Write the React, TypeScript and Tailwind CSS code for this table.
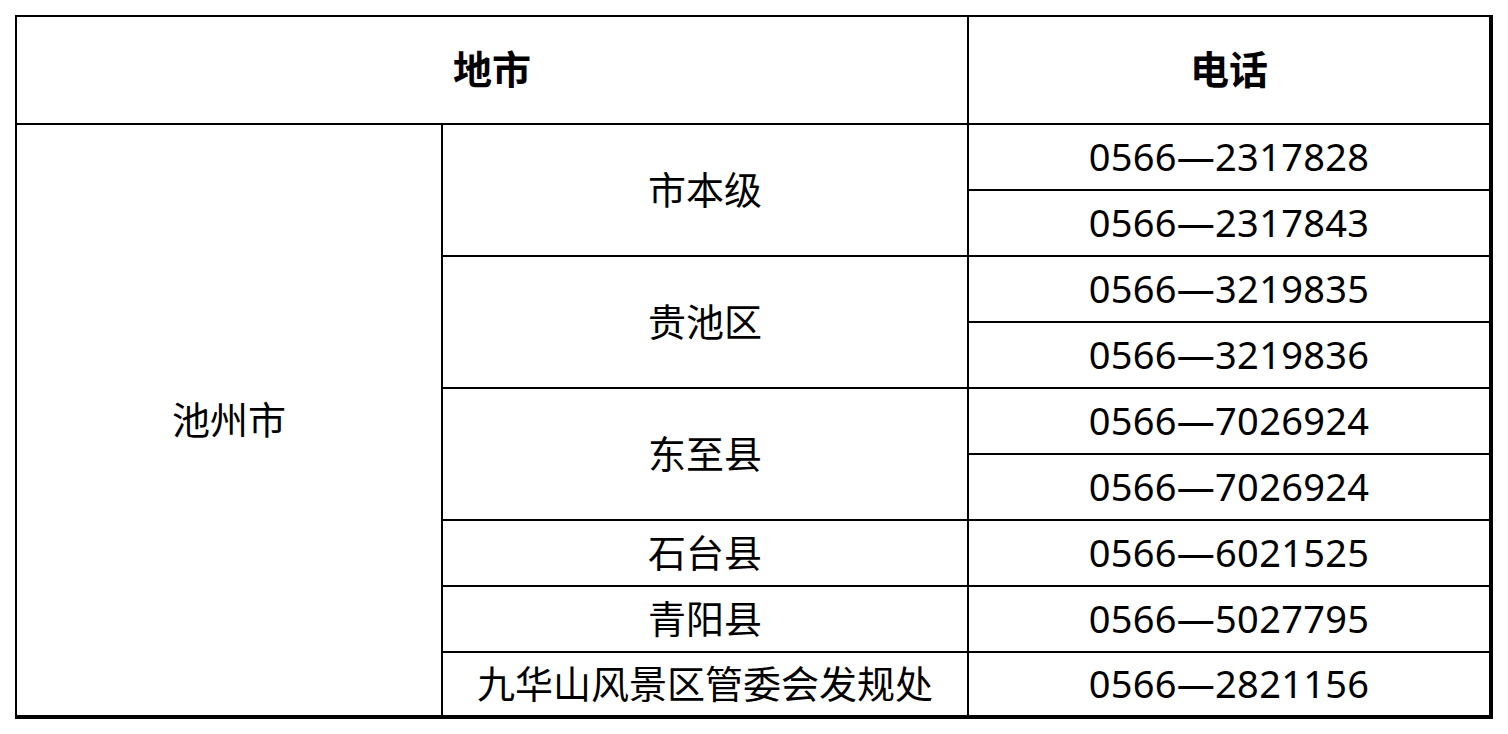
const rows: { district: string; phones: string[] }[] = [
  { district: '市本级', phones: ['0566—2317828', '0566—2317843'] },
  { district: '贵池区', phones: ['0566—3219835', '0566—3219836'] },
  { district: '东至县', phones: ['0566—7026924', '0566—7026924'] },
  { district: '石台县', phones: ['0566—6021525'] },
  { district: '青阳县', phones: ['0566—5027795'] },
  { district: '九华山风景区管委会发规处', phones: ['0566—2821156'] },
];

const cell = 'bg-white flex items-center justify-center text-black pb-[3px]';

export default function App() {
  let r = 2;
  return (
    <div className="min-h-screen bg-white pt-[15px] pl-[15px]" style={{ fontFamily: '"Noto Sans", "Noto Sans CJK SC", sans-serif' }}>
      <div className="w-[1478px] border-t-2 border-l-2 border-b-4 border-r-4 border-black bg-black">
        <div className="grid grid-cols-[424px_524px_520px] grid-rows-[106px_repeat(8,64px)_62px] gap-[2px] text-[38px] leading-none">
          <div className={`${cell} col-span-2 font-bold text-[39px]`}>地市</div>
          <div className={`${cell} font-bold text-[39px]`}>电话</div>
          <div className={cell} style={{ gridColumn: 1, gridRow: '2 / span 9' }}>池州市</div>
          {rows.map((row) => {
            const start = r;
            r += row.phones.length;
            return [
              <div key={row.district} className={cell} style={{ gridColumn: 2, gridRow: `${start} / span ${row.phones.length}` }}>
                {row.district}
              </div>,
              ...row.phones.map((p, i) => (
                <div key={row.district + i} className={`${cell} tracking-[0.3px]`} style={{ gridColumn: 3, gridRow: start + i }}>
                  {p}
                </div>
              )),
            ];
          })}
        </div>
      </div>
    </div>
  );
}
